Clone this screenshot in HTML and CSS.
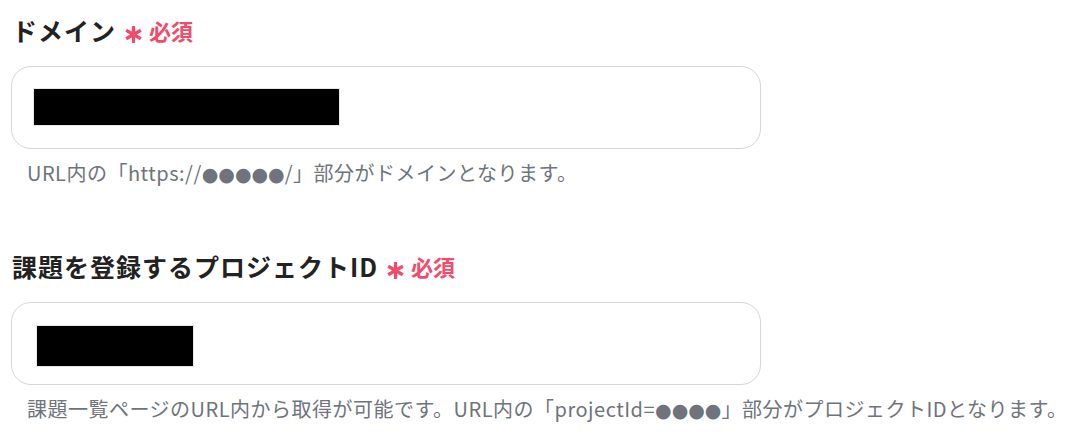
FILE: index.html
```html
<!DOCTYPE html>
<html lang="ja">
<head>
<meta charset="UTF-8">
<title>設定</title>
<link rel="stylesheet" href="styles.css">
</head>
<body>
	<div id="form">
		<div class="field">
			<h3 class="label">ドメイン<span class="req"><svg class="star" viewBox="0 0 16 16"><path d="M8 0V16M1.1 4L14.9 12M1.1 12L14.9 4"/></svg>必須</span></h3>
			<div class="box"><span class="mask mask-domain"></span></div>
			<p class="help">URL内の「https://<span class="dots">●●●●●</span>/」部分がドメインとなります。</p>
		</div>
		<div class="field">
			<h3 class="label">課題を登録するプロジェクトID<span class="req"><svg class="star" viewBox="0 0 16 16"><path d="M8 0V16M1.1 4L14.9 12M1.1 12L14.9 4"/></svg>必須</span></h3>
			<div class="box"><span class="mask mask-project"></span></div>
			<p class="help">課題一覧ページのURL内から取得が可能です。URL内の「projectId=<span class="dots">●●●●</span>」部分がプロジェクトIDとなります。</p>
		</div>
	</div>
</body>
</html>
```

FILE: styles.css
```css
body {margin: 0;background-color: #fff;font-family: "Noto Sans CJK JP", "Noto Sans", sans-serif;}
p, h3 {margin: 0;}
#form {padding: 12px 0 0 11px;}
.field + .field {margin-top: 60px;}
.label {font-size: 25px;line-height: 36px;font-weight: bold;color: #222;padding-left: 1px;letter-spacing: 1px;display: flex;align-items: center;}
.req {display: inline-flex;align-items: center;color: #f24b6a;font-size: 22px;letter-spacing: 0;margin-left: 9px;}
.star {width: 17px;height: 17px;margin: 8px 7px 0 0;}
.star path {stroke: #f24b6a;stroke-width: 3;fill: none;}
.box {width: 748px;height: 81px;border: 1px solid #d3d6dc;border-radius: 20px;margin-top: 18px;}
.mask {display: block;background-color: #000;border: 1px solid #e6e6e6;}
.mask-domain {width: 305px;height: 36px;margin: 21px 0 0 21px;}
.mask-project {width: 156px;height: 40px;margin: 22px 0 0 24px;}
.help {font-size: 20px;line-height: 30px;height: 30px;color: #6e737c;padding-left: 16px;margin-top: 9px;letter-spacing: 0.5px;white-space: nowrap;}
.help .dots {font-family: "DejaVu Sans", sans-serif;font-size: 19px;line-height: 1;letter-spacing: 0;}
```
